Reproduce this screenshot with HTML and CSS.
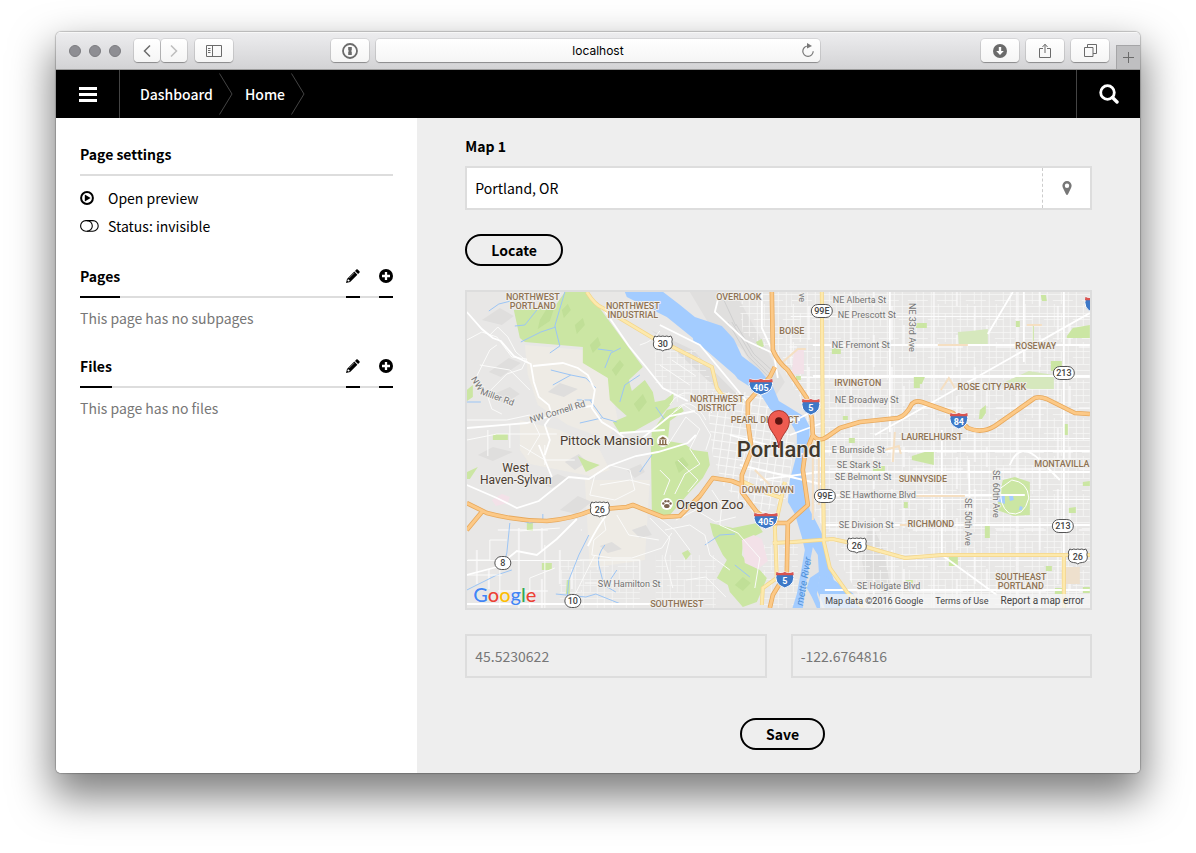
FILE: index.html
```html
<!DOCTYPE html>
<html lang="en">
<head>
<meta charset="utf-8">
<meta name="viewport" content="width=device-width, initial-scale=1">
<title>Home</title>
<link rel="stylesheet" href="styles.css">
</head>
<body>
<div class="window">
  <header class="chrome">
    <div class="chrome-left">
      <div class="lights"><i class="light"></i><i class="light"></i><i class="light"></i></div>
      <div class="history">
        <button class="tool tool-small" type="button" aria-label="Back"><svg width="10" height="14" viewBox="0 0 10 14"><path d="M8 1.5 2.5 7 8 12.500" fill="none" stroke="#6b6b6b" stroke-width="1.500"/></svg></button>
        <button class="tool tool-small" type="button" aria-label="Forward"><svg width="10" height="14" viewBox="0 0 10 14"><path d="M2 1.500 7.500 7 2 12.500" fill="none" stroke="#bdbdbd" stroke-width="1.500"/></svg></button>
      </div>
      <button class="tool" type="button" aria-label="Sidebar"><svg width="16" height="14" viewBox="0 0 16 14" fill="none" stroke="#6b6b6b"><path d="M.5 1.500h15v11H.5zM6.500 1.500v11M2 4.500h2.500M2 6.500h2.500M2 8.500h2.500"/></svg></button>
      <button class="tool push" type="button" aria-label="Passwords"><svg width="16" height="16" viewBox="0 0 16 16"><circle cx="8" cy="8" r="7" fill="none" stroke="#6b6b6b" stroke-width="1.800"/><path d="M6.200 4h3.600v3.200L9 8l.8.800V12H6.200V8.800L7 8l-.8-.8z" fill="#6b6b6b"/></svg></button>
    </div>
    <div class="address">
      <span class="address-text">localhost</span>
      <button class="reload" type="button" aria-label="Reload"><svg width="14" height="15" viewBox="0 0 14 15"><path d="M7 3A5.200 5.200 0 1 0 12.200 8.200" fill="none" stroke="#777" stroke-width="1.200"/><path d="M6 0l5 3L6 5.600z" fill="#777"/></svg></button>
    </div>
    <div class="chrome-right">
      <button class="tool" type="button" aria-label="Downloads"><svg width="14" height="14" viewBox="0 0 14 14"><circle cx="7" cy="7" r="7" fill="#6b6b6b"/><path d="M5.800 3h2.400v4h2.600L7 11 3.200 7h2.600z" fill="#fff"/></svg></button>
      <button class="tool" type="button" aria-label="Share"><svg width="12" height="16" viewBox="0 0 12 16" fill="none" stroke="#6b6b6b"><path d="M4 5.500H.5v9h11v-9H8M6 10V1.500M3.500 4 6 1.200 8.500 4"/></svg></button>
      <button class="tool" type="button" aria-label="Tabs"><svg width="13" height="13" viewBox="0 0 13 13" fill="none" stroke="#6b6b6b"><path d="M.5 3.500h8.500v9H.5zM3.500 3.500v-3h9v9H9"/></svg></button>
      <button class="newtab" type="button" aria-label="New tab"><svg width="11" height="11" viewBox="0 0 11 11"><path d="M5.500 0v11M0 5.500h11" stroke="#6b6b6b"/></svg></button>
    </div>
  </header>

  <nav class="topbar">
    <button class="menu" type="button" aria-label="Menu"><svg width="18" height="15" viewBox="0 0 18 15"><path d="M0 0h18v3H0zM0 6h18v3H0zM0 12h18v3H0z" fill="#fff"/></svg></button>
    <a class="crumb" href="#">Dashboard<svg class="chevron" width="14" height="42" viewBox="0 0 14 42"><path d="M.5.500 13 21 .5 41.500" fill="none" stroke="#444"/></svg></a>
    <a class="crumb" href="#">Home<svg class="chevron" width="14" height="42" viewBox="0 0 14 42"><path d="M.5.500 13 21 .5 41.500" fill="none" stroke="#444"/></svg></a>
    <button class="search" type="button" aria-label="Search"><svg width="20" height="20" viewBox="0 0 20 20" fill="none" stroke="#fff"><circle cx="8.500" cy="8.500" r="6.800" stroke-width="2.800"/><path d="M13.500 13.500 18 18" stroke-width="3.400" stroke-linecap="round"/></svg></button>
  </nav>

  <div class="columns">
    <aside class="sidebar">
      <section class="block">
        <h2 class="heading"><span class="title">Page settings</span></h2>
        <ul class="list">
          <li><a class="item" href="#"><span class="item-icon"><svg width="14" height="14" viewBox="0 0 14 14"><circle cx="7" cy="7" r="5.900" fill="none" stroke="#000" stroke-width="2"/><path d="M4.800 3.600v6.800L10.600 7z"/></svg></span>Open preview</a></li>
          <li><a class="item" href="#"><span class="item-icon"><svg width="19" height="12" viewBox="0 0 19 12" fill="none" stroke="#000"><rect x=".6" y=".6" width="17.600" height="10.600" rx="5.300" stroke-width="1.100"/><path d="M7 .6a5.300 5.300 0 0 1 0 10.600" stroke-width="1.100"/></svg></span>Status: invisible</a></li>
        </ul>
      </section>
      <section class="block">
        <h2 class="heading"><a class="title tab" href="#">Pages</a>
          <a class="tab action" href="#" aria-label="Edit pages"><svg width="14" height="14" viewBox="0 0 14 14"><use href="#pencil"/></svg></a>
          <a class="tab action" href="#" aria-label="Add page"><svg width="14" height="14" viewBox="0 0 14 14"><use href="#plus"/></svg></a></h2>
        <p class="empty">This page has no subpages</p>
      </section>
      <section class="block">
        <h2 class="heading"><a class="title tab" href="#">Files</a>
          <a class="tab action" href="#" aria-label="Edit files"><svg width="14" height="14" viewBox="0 0 14 14"><use href="#pencil"/></svg></a>
          <a class="tab action" href="#" aria-label="Add file"><svg width="14" height="14" viewBox="0 0 14 14"><use href="#plus"/></svg></a></h2>
        <p class="empty">This page has no files</p>
      </section>
      <svg class="defs" width="0" height="0" aria-hidden="true"><defs>
        <g id="pencil"><path d="M10.300.6a1 1 0 0 1 1.400 0l1.700 1.700a1 1 0 0 1 0 1.400l-1.300 1.300L9 1.900zM8.300 2.600l3.100 3.100-7.300 7.300L0 14l1-4.100z"/><path d="M2 10l2 2-1.800.6-.8-.8z" fill="#fff"/><path d="M3.200 9 8.300 3.900" stroke="#aaa" stroke-width=".7"/></g>
        <g id="plus"><circle cx="7" cy="7" r="7"/><path d="M7 3v8M3 7h8" stroke="#fff" stroke-width="2.300"/></g>
      </defs></svg>
    </aside>

    <main class="main">
      <form class="form" onsubmit="return false">
        <label class="label" for="place">Map 1</label>
        <div class="field">
          <input class="place" id="place" type="text" value="Portland, OR">
          <span class="field-icon"><svg width="10" height="14" viewBox="0 0 10 14"><path fill-rule="evenodd" d="M5 0a4.600 4.600 0 0 1 4.600 4.700c0 1-.3 1.700-.7 2.500L6 13.300c-.4.900-1.600.9-2 0L1.100 7.200C.7 6.400.4 5.700.4 4.700A4.600 4.600 0 0 1 5 0zm0 2.500a2.200 2.200 0 1 0 0 4.400 2.200 2.200 0 0 0 0-4.400z" fill="#777"/></svg></span>
        </div>
        <button class="pill" type="button">Locate</button>

        <div class="map">
          <svg class="map-art" viewBox="467 292 623 316" preserveAspectRatio="xMidYMid slice" role="img" aria-label="Map of Portland">
            <defs>
              <pattern id="gridA" width="29" height="38" patternUnits="userSpaceOnUse"><path d="M0 2.500h29M0 9.500h29M0 15.500h18M0 22.500h29M0 28.500h29M9 34.500h20M3.500 0v38M10.500 0v22M17.500 9v29M24.500 0v38" stroke="#f6f6f5" stroke-width=".8" fill="none"/></pattern>
              <pattern id="gridB" width="83" height="61" patternUnits="userSpaceOnUse"><path d="M0 11.500h83M0 42h50M21 0v61M62 0v35M44 30v31M74 20v20" stroke="#fdfdfd" stroke-width="1.200" fill="none"/></pattern>
              <pattern id="gridC" width="8" height="8" patternUnits="userSpaceOnUse" patternTransform="rotate(8)"><path d="M0 .5h8M.5 0v8" stroke="#f8f8f7" stroke-width="1"/></pattern>
              <g id="interstate"><path d="M-8-7Q-4-5 0-7 4-5 8-7 12 5 0 9-12 5-8-7z" fill="#3d78c7" stroke="#fff"/><path d="M-8.500-7Q-4-5 0-7 4-5 8.500-7l.4 3.200H-8.900z" fill="#d9534f"/></g>
              <g id="interstate-wide"><path d="M-11-7Q-5-5 0-7 5-5 11-7 15 5 0 9-15 5-11-7z" fill="#3d78c7" stroke="#fff"/><path d="M-11.500-7Q-5-5 0-7 5-5 11.500-7l.4 3.200h-23.800z" fill="#d9534f"/></g>
              <path id="us" d="M-8-7q2 1.500 4 0 2 1 4 0 2 1 4 0 2 1.500 4 0l1.500 3q-1 3 0 5 0 5-5 5.500-3 0-4.500 1.500-1.500-1.500-4.500-1.500-5-.5-5-5.500 1-2 0-5z" fill="#fff" stroke="#555"/>
              <rect id="state" x="-8" y="-6.500" width="16" height="13" rx="6.500" fill="#fff" stroke="#555"/>
              <rect id="state-wide" x="-10.500" y="-6.500" width="21" height="13" rx="6.500" fill="#fff" stroke="#555"/>
            </defs>

            <rect x="467" y="292" width="623" height="316" fill="#e8e7e6"/>
            <g fill="#eeebe5">
              <path d="M525 345l60 5 25 30 8 40-10 20-40-15-30-20-10-30zM520 420l40 10 40 20 10 20-20 6-60-12-10-14zM585 480h65l-5 80-55 8z"/>
            </g>
            <g fill="#dfdedd">
              <path d="M482 320l18-12 14 8-12 9zM489 372l20-14 12 5-20 14zM492 395l18-8 10 7-16 10zM548 392l12-9 18 6-14 8zM565 462l14-8 8 8-12 8zM560 510l18-14 14 6-16 12zM478 455l15-8 20 5-20 9zM600 546l12-4 10 7-14 4zM627 470l14-6 4 8-10 6zM540 482l18-8 12 5-18 9zM632 530l14-5 6 10-12 3z"/>
            </g>
            <path d="M690 292h45l50 90-12 18-30-50-35-28z" fill="#e0dfde"/>
            <path d="M651 330l42 20 50 50-10 3-66-60zM870 520l14 30 10 58h-22l-10-48z" fill="#dedddc"/>
            <g fill="none" stroke="#cfcfcf"><path d="M728 322l20 34 22 22M732 322l20 34 20 20M736 324l18 30 20 18M724 300l12 26"/></g>

            <path d="M792 292h298v316H866l-34-60-18-40-3-70-22-80z" fill="url(#gridA)"/>
            <path d="M792 292h298v316H866l-34-60-18-40-3-70-22-80z" fill="url(#gridB)"/>
            <path d="M738 292h54l22 100-5 20-36-60-30-20z" fill="url(#gridA)"/>
            <path d="M706 392h60l28 50-6 55-30 20-35-32-10-30z" fill="url(#gridC)"/>
            <path d="M467 528h115v80H467z" fill="url(#gridB)"/>
            <path d="M655 350h40l22 40-40 12-22-20zM656 555h60v53h-60zM560 560h80v48h-80zM760 545h38v63h-38z" fill="url(#gridA)" opacity=".8"/>

            <g fill="#cbe6a3">
              <path d="M514 310l6 28 5 4 58 5v16l25 15 2 22 8 8 9 8-14 6 7 11 13-1 27-15 13-15 1-9-9 7-10 2-2-10-8-12-13 11-3-11 14-13-55-75h-23l-9 13z"/>
              <path d="M652 432l15-22 14-4 3 5-14 10-2 20 17 3 8 6 15 2 2 13-7 13-13 14-20 23h-8l-10-4-1-65zM710 523l23 5 24-5 6 9-20 10-1 13 5 7 13 8 7 8-4 10-6 14-14 5-13-15-2-7-11-7 10-18-4-5-10-20zM578 456l10 5 12 4-14 7zM467 472l11-5-8 12h-3zM467 390l6-5v12l-6 4zM493 434h15v6h-15zM527 523h6v8h-6zM542 563h10v7h-10zM567 580h3v14h-4zM682 553l6-3 3 4-5 6z"/>
              <path d="M1003 480l12-3 15 5v33l-16 1-17-6 2-12zM912 456l16-5h6v14l-22-5zM914 375h12l-4 9h-2v4h-6zM916 323h11v5h-11zM1016 321h4v6h-4zM1067 336l6-8 17-3v13h-23zM1051 361h11v10h-11zM1033 325h1v25h-1zM1041 295h5l1 6h-5zM980 410l6-5v8l-4 6h-3zM1064 424h4v11h-4zM985 524l5 2v12h-5zM949 557h9v9h-9zM1069 508l7-1v6h-7zM1083 482l7-1v5h-7zM1046 566h6v5h-6zM1055 588h9v6h-9zM1083 587h7v6h-7zM756 342l6-3 2 7-4 3zM832 348h9v6h-9zM796 376h5v4h-5zM849 438h6v5h-6zM843 416h5v4h-5zM873 466h12v6h-12zM904 502h4v6h-4zM906 580h7v6h-8z"/>
            </g>
            <path d="M958 332l13-1 17-2v15h-29zM1003 383l26-12 25 4v14h-22l-30-4z" fill="#d6e8bd"/>
            <path d="M1062 567h18v17h-18z" fill="#eee0cd"/>
            <path d="M492 500l10-6 8 3-2 6-12 3zM742 540l12-5 8 4 6 22-10 8-13-6zM794 350h10v24h-12z" fill="#f3e1e8"/>
            <g fill="#badb92" opacity=".7"><path d="M540 320l8-13 8-4-6 18-12 8zM575 325l8-7 2 7-8 9zM590 345l8-8 3 8-8 8zM612 370l8-10 4 5-8 11zM562 310l6-6 3 6-7 8zM634 404l9-10 4 8-8 10zM675 462l8-5 6 8-10 8zM735 585l8-8 8 6-8 8z"/></g>

            <g fill="#a3ccff">
              <path d="M625 292l2 5 26 13 14 7 26 21 1 5 4 0 37 32 3 4 22 14 10 16 10 8 10 4 7 13v20l-7 26-2 22 7 12 7 23 3 13-3 17-5 27-5 16h70l-8-16-20-14-5-16-4-24-6-13-9-17-4-20-1-23 4-20 1-20-5-10-16-10-10-6-7-17-13-15-17-13-8-17-12-13-27-9-16-13-17-13z"/>
              <path d="M1000 494h5v10l-8-3zM1009 494l4 1 1 5-4 1zM1020 506l3 1-1 3h-3z"/>
            </g>
            <path d="M813 547l5 8 1 17-9 6-3 10 5 9 5 11h-14l4-30zM820 576l10 8 16 12-12 12h-12l-5-14z" fill="#e4e3e2"/>
            <path d="M820 575q10 0 18 14 12 10 22 19h-35l-8-18z" fill="#a3ccff"/>

            <g fill="none" stroke="#9cc5f5" stroke-width="1">
              <path d="M565 292q-6 20-10 34l5 20-10 7M556 327l-15 5-20 10M541 305l-16 20-10 1M489 311l10-7 12-3M605 368l6-15 10-5M598 349l15 2M551 370l20 5 15 3 10 10M571 375l-18 10M590 400l13 18 14 4M592 400h-15M602 418l-22 5M640 375l-15 10-5 17M665 420l-9-13M510 523l-3 30-2 7M467 590l30-15 15-5M510 518l20 5 13-2v-7M589 535l-10 20-10 25-2 20M605 545q-8 10-6 20l5 20 12 7M617 570l-8 12M556 594l30 3 10-3 25 10h22M705 545l15-10 15-1M735 565l15 12M467 402h14M640 472l12-17"/>
            </g>

            <g fill="none" stroke="#fbfbfa" stroke-width="1">
              <path d="M467 340l15-8 15 5 15 20 15 2-5 10-15 5-20 20 5 15 10 5M467 420h40l23-5 10 20-12 20M475 380l15-30 7-5M490 335l8-8 10 10 8 15 12 10M480 365l30 5 20 20M467 440l30-6h60M488 430v26M510 425v23M520 445l25 15h30M545 445v20M595 475l15-10 20 5 5 20-20 10-25-5 5-20M600 485l30-5 20 5M640 505l15 10 20 15 15 20M650 518l20 20-5 20 8 30M617 515l12 20 30 5M592 510l12 10 2 10-12 10-2 15 20 3h20l30-10 10-15M595 555l-20 40M560 528l-40 3M585 583h60l18 3M676 520l20-10 20 12 20-5M665 530l25-5 15 10 5 20 20 15M712 490l10 15-2 20 18 8 22 25-5 30M686 580l20-3 20 20M664 420l20-15 15 10 12 20-5 15M668 445l18-28 14 12-10 20 10 15-15 10-10 20M660 470l10 10-6 15M678 460l20 20-10 12M468 560h22v-20h17M500 608v-45M530 608v-30l25-10M545 545v63M467 575h35M580 560h60v30M670 405q8-14 20-12 14 4 22 20M674 412q8-10 16-8 10 4 16 16M640 345q14-4 20-14M660 365l30 20M672 360l24 16"/>
            </g>
            <g fill="none" stroke="#fff" stroke-width="1.800">
              <path d="M467 312l15 17 11 9 8 3 13 15 17 8 3 18 5 15 10 8 3 10-7 10 5 15-5 15M533 366l30-3 15 5 10 7 7 15-3 18 10 14 13 8 11 9"/>
              <path d="M467 428l60-5 50-15 15-2M467 485l30 13 20 10 22-7 30-24 20 2 20-13 27-10 22-4 30-9 8-8M539 445l13 32M467 575l30-8 20-16 20 4 20-16 20-20M467 604h190M640 440l30-24 25-5M588 546q10-20 18-30"/>
              <path d="M665 430l-45 3M603 308l26 38 18 22 16 20 25 13M762 292v36l12 26 4 24M720 292l-5 20 30 28 30 14M660 325l40 20 50 60M760 480l60-8M730 435l95 25M796 420l25-13M790 435l35-13M740 465l85 20"/>
              <path d="M1064 292v263M875 435l67-38 148-84M988 334l25-42M800 420h-20M813 376h277M813 472h277M824 451h266M825 495h200M825 525h265M890 292v140M942 430v125l55 40M1024 292v70M813 345h277M825 590h265M970 520l-1-60M1010 465q10-25 30-5l20 20"/>
            </g>
            <g fill="none" stroke="#f5dfc2" stroke-width="2"><path d="M813 430v90M819 445v60M938 345h30M941 390l8-12 6 10M885 450l14-4 2 8M915 496h50M900 525h24M1027 325h15M783 362l15-13h8M895 432l-2 30M755 470l20 20"/></g>
            <path d="M1012 480q16 2 17 18-5 20-20 15-10-8-8-25z" fill="none" stroke="#fff" stroke-width="1"/>

            <g fill="none" stroke="#f3d58a" stroke-width="4"><path d="M587 292q8 13 16 16l50 30 20 9 39 20 5 21 5 7 21 6M822 292l1 156 1 94 6 26 17 24 16 16M773 543l20-1 40-3 27 6 20 6 25 7 37-3h148M1064 555v53M785 482l-10 46 2 50-14 10-1 17M742 481l25 12 15 5"/></g>
            <g fill="none" stroke="#fde9ac" stroke-width="2.600"><path d="M587 292q8 13 16 16l50 30 20 9 39 20 5 21 5 7 21 6M822 292l1 156 1 94 6 26 17 24 16 16M773 543l20-1 40-3 27 6 20 6 25 7 37-3h148M1064 555v53M785 482l-10 46 2 50-14 10-1 17M742 481l25 12 15 5"/></g>

            <g fill="none" stroke="#e8a95c" stroke-width="4.600" stroke-linejoin="round"><path d="M772 292l1 58q5 12 15 20l19 28 5 20 1 17-8 20-2 15 5 35-20 18-1 49-14 23-3 13M775 367l-5 10-22 25v20l4 28-10 25v17l15 20 16 11h15M813 435q5 8 14 2l13-9 20-6 38-4q8-2 14-14 4-4 10-2l31 11 15 15q14 6 27-2l37-26q5-5 15-1l28 14 15 1M467 503l20 10q30 8 60 8 25-2 46-11l34-3 6-2 30 12 17-1 20-20 13-18 19 3 10 4M467 530l15-18"/></g>
            <g fill="none" stroke="#fcc987" stroke-width="3" stroke-linejoin="round"><path d="M772 292l1 58q5 12 15 20l19 28 5 20 1 17-8 20-2 15 5 35-20 18-1 49-14 23-3 13M775 367l-5 10-22 25v20l4 28-10 25v17l15 20 16 11h15M813 435q5 8 14 2l13-9 20-6 38-4q8-2 14-14 4-4 10-2l31 11 15 15q14 6 27-2l37-26q5-5 15-1l28 14 15 1M467 503l20 10q30 8 60 8 25-2 46-11l34-3 6-2 30 12 17-1 20-20 13-18 19 3 10 4M467 530l15-18"/></g>

            <g class="shield">
              <use href="#us" x="663" y="343"/><text x="663" y="347">30</text>
              <use href="#us" x="600" y="509"/><text x="600" y="513">26</text>
              <use href="#us" x="857" y="545"/><text x="857" y="549">26</text>
              <use href="#us" x="1078" y="556"/><text x="1078" y="560">26</text>
              <use href="#state-wide" x="822" y="311"/><text x="822" y="314">99E</text>
              <use href="#state-wide" x="825" y="496"/><text x="825" y="499">99E</text>
              <use href="#state-wide" x="1064" y="373"/><text x="1064" y="376">213</text>
              <use href="#state-wide" x="1063" y="526"/><text x="1063" y="529">213</text>
              <use href="#state" x="503" y="563"/><text x="503" y="566">8</text>
              <use href="#state" x="573" y="601"/><text x="573" y="604">10</text>
            </g>
            <g class="shield shield-blue">
              <use href="#interstate-wide" x="761" y="386"/><text x="761" y="391">405</text>
              <use href="#interstate-wide" x="766" y="520"/><text x="766" y="525">405</text>
              <use href="#interstate" x="811" y="406"/><text x="811" y="411">5</text>
              <use href="#interstate" x="785" y="579"/><text x="785" y="584">5</text>
              <use href="#interstate" x="959" y="420"/><text x="959" y="425">84</text>
              <use href="#interstate" x="1094" y="304"/>
            </g>

            <g class="area">
              <text x="533" y="300">NORTHWEST</text><text x="533" y="309">PORTLAND</text>
              <text x="633" y="309">NORTHWEST</text><text x="633" y="318">INDUSTRIAL</text>
              <text x="739" y="300">OVERLOOK</text><text x="792" y="334">BOISE</text>
              <text x="717" y="402">NORTHWEST</text><text x="717" y="411">DISTRICT</text>
              <text x="765" y="423">PEARL DISTRICT</text><text x="768" y="493">DOWNTOWN</text>
              <text x="858" y="386">IRVINGTON</text><text x="1036" y="349">ROSEWAY</text>
              <text x="992" y="390">ROSE CITY PARK</text><text x="932" y="440">LAURELHURST</text>
              <text x="923" y="482">SUNNYSIDE</text><text x="1062" y="467">MONTAVILLA</text>
              <text x="931" y="527">RICHMOND</text><text x="677" y="607">SOUTHWEST</text>
              <text x="1021" y="580">SOUTHEAST</text><text x="1021" y="589">PORTLAND</text>
            </g>
            <g class="street">
              <text x="833" y="303">NE Alberta St</text><text x="838" y="318">NE Prescott St</text>
              <text x="832" y="348">NE Fremont St</text><text x="835" y="403">NE Broadway St</text>
              <text x="832" y="453">E Burnside St</text><text x="837" y="468">SE Stark St</text>
              <text x="835" y="480">SE Belmont St</text><text x="840" y="498">SE Hawthorne Blvd</text>
              <text x="839" y="528">SE Division St</text><text x="857" y="589">SE Holgate Blvd</text>
              <text x="598" y="587">SW Hamilton St</text>
              <text transform="translate(909 303) rotate(90)">NE 33rd Ave</text>
              <text transform="translate(993 470) rotate(90)">SE 60th Ave</text>
              <text transform="translate(965 498) rotate(90)">SE 50th Ave</text>
              <text transform="translate(799 293) rotate(90)">ve</text>
              <text transform="translate(471 379) rotate(58)">NW</text>
              <text transform="translate(480 394) rotate(20)">Miller Rd</text>
              <text transform="translate(531 423) rotate(-17)">NW Cornell Rd</text>
              <text class="water" transform="translate(803 606) rotate(-80)">mette River</text>
            </g>
            <g class="place-name">
              <text x="607" y="445">Pittock Mansion</text><text x="710" y="509">Oregon Zoo</text>
              <text class="town" x="516" y="472">West</text><text class="town" x="516" y="484">Haven-Sylvan</text>
              <text class="city" x="779" y="457">Portland</text>
            </g>
            <circle cx="663" cy="441" r="6" fill="#fff"/>
            <path d="M658.500 439.500l4.500-3 4.500 3zM659.500 440h1.500v4h-1.500zM662.300 440h1.500v4h-1.500zM665 440h1.500v4H665zM658.500 444h9v1.200h-9z" fill="#86694a"/>
            <circle cx="667" cy="504" r="6" fill="#fff"/>
            <g fill="#7b6350"><ellipse cx="667" cy="506" rx="2.800" ry="2"/><circle cx="663.500" cy="503.500" r="1.200"/><circle cx="665.700" cy="501.300" r="1.200"/><circle cx="668.500" cy="501.300" r="1.200"/><circle cx="670.700" cy="503.500" r="1.200"/></g>

            <path d="M779 448c-1-14-10.500-16-10.500-27a10.500 10.500 0 0 1 21 0c0 11-9.500 13-10.500 27z" fill="#ee5b50" stroke="#a8352c"/>
            <circle cx="779" cy="421" r="3.800" fill="#5c1511"/>
          </svg>
          <div class="logo" aria-label="Google"><span class="g-blue">G</span><span class="g-red">o</span><span class="g-yellow">o</span><span class="g-blue">g</span><span class="g-green">l</span><span class="g-red">e</span></div>
          <div class="credits"><span>Map data ©2016 Google</span><a href="#">Terms of Use</a><a class="report" href="#">Report a map error</a></div>
        </div>

        <div class="coords">
          <input class="coord" type="text" aria-label="Latitude" value="45.5230622" readonly>
          <input class="coord" type="text" aria-label="Longitude" value="-122.6764816" readonly>
        </div>
        <div class="submit"><button class="pill" type="submit">Save</button></div>
      </form>
    </main>
  </div>
</div>
</body>
</html>
```
FILE: styles.css
```css
* { box-sizing: border-box; }

body {
  margin: 0;
  padding: 32px 56px 80px;
  background: #fff;
  color: #000;
  font: 14px/24px "Noto Sans CJK SC", "Noto Sans", sans-serif;
}

button, input { font: inherit; color: inherit; }
button { padding: 0; border: 0; background: none; }
a { color: inherit; text-decoration: none; }
svg { display: block; }

.window {
  display: flex;
  flex-direction: column;
  min-height: calc(100vh - 112px);
  overflow: hidden;
  border-radius: 5px;
  box-shadow: 0 0 1px 1px rgba(0, 0, 0, .2), 0 20px 40px 4px rgba(0, 0, 0, .5);
}

/* Browser frame */
.chrome {
  display: grid;
  grid-template-columns: minmax(0, 1fr) minmax(0, 41%) minmax(0, 1fr);
  column-gap: 7px;
  height: 38px;
  border-bottom: 1px solid #9c9c9c;
  background: linear-gradient(#ededef, #d3d3d5);
  box-shadow: inset 0 1px #f7f7f7;
}
.chrome-left, .chrome-right { display: flex; align-items: center; }
.chrome-left { gap: 8px; padding-left: 13px; }
.lights { display: flex; gap: 8px; margin-right: 5px; }
.light { width: 12px; height: 12px; border: 1px solid #7c7c80; border-radius: 50%; background: #8e8e93; }
.history { display: flex; gap: 1px; }
.tool {
  display: flex;
  align-items: center;
  justify-content: center;
  width: 38px;
  height: 23px;
  border-radius: 4px;
  background: linear-gradient(#fff, #f5f5f5);
  box-shadow: 0 0 0 1px rgba(0, 0, 0, .08), 0 1px 1px rgba(0, 0, 0, .3);
}
.tool-small { width: 26px; }
.push { margin-left: auto; }
.address {
  display: flex;
  position: relative;
  align-items: center;
  justify-content: center;
  align-self: center;
  height: 23px;
  border-radius: 4px;
  background: linear-gradient(#fff, #f5f5f5);
  box-shadow: 0 0 0 1px rgba(0, 0, 0, .08), 0 1px 1px rgba(0, 0, 0, .3);
}
.address-text { font: 12px/23px Inter, sans-serif; }
.reload { position: absolute; right: 5px; top: 4px; }
.chrome-right { justify-content: flex-end; gap: 7px; }
.newtab {
  display: flex;
  align-items: center;
  justify-content: center;
  align-self: flex-end;
  width: 24px;
  height: 24px;
  border: solid #a5a5a7;
  border-width: 1px 0 0 1px;
  background: #bfbfc1;
}

/* Panel header */
.topbar { display: flex; height: 48px; background: #000; color: #fff; }
.menu, .search { display: flex; align-items: center; justify-content: center; width: 64px; }
.menu { border-right: 1px solid #444; margin-right: 20px; }
.search { border-left: 1px solid #444; margin-left: auto; }
.crumb { display: flex; align-items: center; gap: 6px; margin-right: 12px; font-weight: 500; }

/* Columns */
.columns { display: grid; flex: 1; grid-template-columns: 1fr 2fr; }
.sidebar { padding: 24px; background: #fff; }
.block { margin-bottom: 24px; }
.heading {
  display: flex;
  gap: 19px;
  margin: 0 0 8px;
  border-bottom: 2px solid #ddd;
  font-size: 14px;
  line-height: 24px;
  font-weight: 700;
}
.title { margin-right: auto; padding-bottom: 8px; }
.tab { margin-bottom: -2px; border-bottom: 2px solid #000; }
.action { display: flex; align-items: center; width: 14px; padding-bottom: 8px; }
.list { margin: 0; padding: 0; list-style: none; }
.item { display: flex; line-height: 28px; }
.item-icon { display: flex; align-items: center; width: 28px; }
.empty { margin: 0; color: #777; }

/* Form */
.main { min-width: 0; padding: 16px 48px 22px; background: #eee; }
.label { display: block; margin-bottom: 8px; font-weight: 700; }
.field { display: flex; height: 44px; margin-bottom: 24px; border: 2px solid #ddd; background: #fff; }
.place { flex: 1; min-width: 0; padding: 0 8px; border: 0; background: none; outline: 0; }
.field-icon { display: flex; align-items: center; justify-content: center; width: 48px; border-left: 1px dashed #ccc; }
.pill {
  height: 32px;
  padding: 0 24px;
  border: 2px solid #000;
  border-radius: 16px;
  font-weight: 700;
  line-height: 28px;
}
.map { position: relative; margin: 24px 0; border: 2px solid #ddd; overflow: hidden; }
.map-art { width: 100%; height: 316px; }
.coords { display: grid; grid-template-columns: 1fr 1fr; gap: 24px; margin-bottom: 40px; }
.coord { width: 100%; height: 44px; padding: 0 8px; border: 2px solid #ddd; background: none; color: #777; outline: 0; }
.submit { padding-left: 8px; text-align: center; }

/* Map lettering */
.map-art text { font-family: Roboto, sans-serif; paint-order: stroke; stroke: #f0efed; stroke-width: 2px; stroke-linejoin: round; }
.area text { fill: #8f7353; font-size: 9px; font-weight: 500; text-anchor: middle; }
.street text { fill: #737373; font-size: 9px; }
.street .water { fill: #4f8fd6; stroke: none; font-size: 10px; font-style: italic; }
.map-art .shield text { fill: #444; stroke: none; font-size: 9px; font-weight: 500; text-anchor: middle; }
.map-art .shield-blue text { fill: #fff; font-weight: 700; }
.place-name text { fill: #4a3c31; font-size: 13px; text-anchor: middle; }
.place-name .town { font-size: 12px; }
.place-name .city { fill: #40382c; font-size: 22px; font-weight: 500; }
.logo { position: absolute; left: 6px; bottom: 0; color: #4285f4; font: 500 20px/28px Lato, sans-serif; text-shadow: 0 0 1px #fff; }
.g-red { color: #ea4335; }
.g-yellow { color: #fbbc05; }
.g-green { color: #34a853; }
.credits {
  display: flex;
  position: absolute;
  right: 0;
  bottom: 0;
  gap: 12px;
  padding: 0 6px 0 5px;
  background: rgba(245, 245, 245, .75);
  color: #444;
  font: 9px/14px Roboto, sans-serif;
}
.report { font-size: 10px; }
```
